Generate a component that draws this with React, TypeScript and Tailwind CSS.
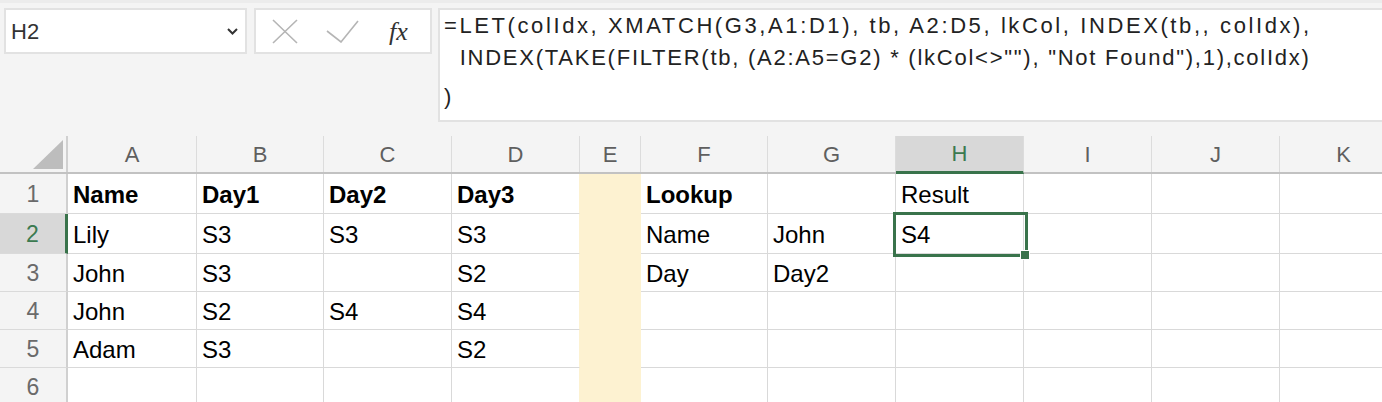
import React from 'react';

const GREEN = 'border-[#39734b]';

const cols = [
    { k: 'A', w: 'w-[129px]' },
    { k: 'B', w: 'w-[127px]' },
    { k: 'C', w: 'w-[128px]' },
    { k: 'D', w: 'w-[128px]' },
    { k: 'E', w: 'w-[61px]' },
    { k: 'F', w: 'w-[127px]' },
    { k: 'G', w: 'w-[128px]' },
    { k: 'H', w: 'w-[128px]' },
    { k: 'I', w: 'w-[128px]' },
    { k: 'J', w: 'w-[128px]' },
    { k: 'K', w: 'w-[128px]' },
];

type Row = { h: string; cells: string[]; bold?: number[] };

const rows: Row[] = [
    { h: 'h-[40px]', cells: ['Name', 'Day1', 'Day2', 'Day3', '', 'Lookup', '', 'Result'], bold: [0, 1, 2, 3, 5] },
    { h: 'h-[40px]', cells: ['Lily', 'S3', 'S3', 'S3', '', 'Name', 'John', 'S4'] },
    { h: 'h-[38px]', cells: ['John', 'S3', '', 'S2', '', 'Day', 'Day2'] },
    { h: 'h-[38px]', cells: ['John', 'S2', 'S4', 'S4'] },
    { h: 'h-[38px]', cells: ['Adam', 'S3', '', 'S2'] },
    { h: 'h-[38px]', cells: [] },
];

const FormulaBar = () => (
    <div className="flex h-[136px] pt-[5px] pl-[4px]">
        <div className="w-[243px] h-[46px] bg-white border-2 border-[#e2e2e2] flex items-center justify-between pl-[5px] pr-[7px]">
            <span className="text-[22px] text-[#333]">H2</span>
            <svg width="11" height="7" viewBox="0 0 11 7" fill="none" stroke="#333" strokeWidth="2">
                <path d="M1 1l4.5 4.5L10 1" />
            </svg>
        </div>
        <div className="ml-[7px] w-[178px] h-[46px] bg-white border-2 border-[#e2e2e2] flex items-center pl-[16px]">
            <svg width="26" height="25" viewBox="0 0 26 25" fill="none" stroke="#b5b5b5" strokeWidth="1.6">
                <path d="M1 1l24 23M25 1L1 24" />
            </svg>
            <svg className="ml-[28px]" width="33" height="23" viewBox="0 0 33 23" fill="none" stroke="#b5b5b5" strokeWidth="1.6">
                <path d="M1 11l14 11L32 1" />
            </svg>
            <span className="ml-[30px] text-[26px] italic text-[#333] font-['Liberation_Serif',serif]">fx</span>
        </div>
        <div className="ml-[6px] flex-1 h-[114px] bg-white border-2 border-r-0 border-[#e2e2e2] pl-[4px] text-[22px] leading-[32px] text-[#222] whitespace-pre">
            <div className="tracking-[2.6px]">=LET(colIdx, XMATCH(G3,A1:D1), tb, A2:D5, lkCol, INDEX(tb,, colIdx),</div>
            <div className="tracking-[1.75px]">{'  INDEX(TAKE(FILTER(tb, (A2:A5=G2) * (lkCol<>""), "Not Found"),1),colIdx)'}</div>
            <div className="mt-[7px]">)</div>
        </div>
    </div>
);

const HeaderRow = () => (
    <div className="flex h-[38px] border-b-2 border-[#c2c2c2]">
        <div className="w-[68px] shrink-0 border-r-2 border-[#d0d0d0] relative">
            <svg className="absolute left-[33px] top-[4px]" width="30" height="29" viewBox="0 0 30 29">
                <path d="M30 0V29H0Z" fill="#bdbdbd" />
            </svg>
        </div>
        {cols.map(c => {
            const sel = c.k === 'H';
            return (
                <div
                    key={c.k}
                    className={`${c.w} shrink-0 border-r border-[#dcdcdc] flex items-center justify-center text-[22px] ${sel ? 'bg-[#d8d8d8] text-[#3b7a50] border-b-[3px] border-b-[#39734b] -mb-[2px]' : 'text-[#5f5f5f]'}`}
                >
                    {c.k}
                </div>
            );
        })}
    </div>
);

export default function App() {
    return (
        <div className="w-[1382px] h-[402px] overflow-hidden bg-[#f4f4f4] font-['Liberation_Sans',Arial,sans-serif] border-t-[3px] border-[#ececec]">
            <FormulaBar />
            <div className="relative -mt-[3px]">
                <HeaderRow />
                {rows.map((r, ri) => {
                    const selRow = ri === 1;
                    return (
                        <div key={ri} className={`flex ${r.h}`}>
                            <div
                                className={`w-[68px] shrink-0 flex items-center justify-center pt-[2px] text-[23px] ${selRow ? `bg-[#d8d8d8] text-[#3b7a50] border-r-[3px] ${GREEN}` : 'text-[#6a6a6a] border-r-2 border-[#d0d0d0]'} border-b border-b-[#dadada]`}
                            >
                                {ri + 1}
                            </div>
                            {cols.map((c, ci) => {
                                const isE = c.k === 'E';
                                const isD = c.k === 'D';
                                const txt = r.cells[ci] ?? '';
                                const bold = r.bold?.includes(ci);
                                return (
                                    <div
                                        key={c.k}
                                        className={`${c.w} shrink-0 flex items-center pt-[3px] pl-[5px] text-[24px] text-black ${isE ? 'bg-[#fdf2d1]' : 'bg-white border-b border-[#d9d9d9]'} ${isE ? '' : isD ? 'border-r border-r-[#fdf2d1]' : 'border-r'} ${bold ? 'font-bold' : ''}`}
                                    >
                                        {txt}
                                    </div>
                                );
                            })}
                        </div>
                    );
                })}
                <div className={`absolute left-[893px] top-[76px] w-[135px] h-[45px] border-[3px] ${GREEN}`} />
                <div className="absolute left-[1020px] top-[114px] w-[10px] h-[10px] bg-[#39734b] border border-white" />
            </div>
        </div>
    );
}
